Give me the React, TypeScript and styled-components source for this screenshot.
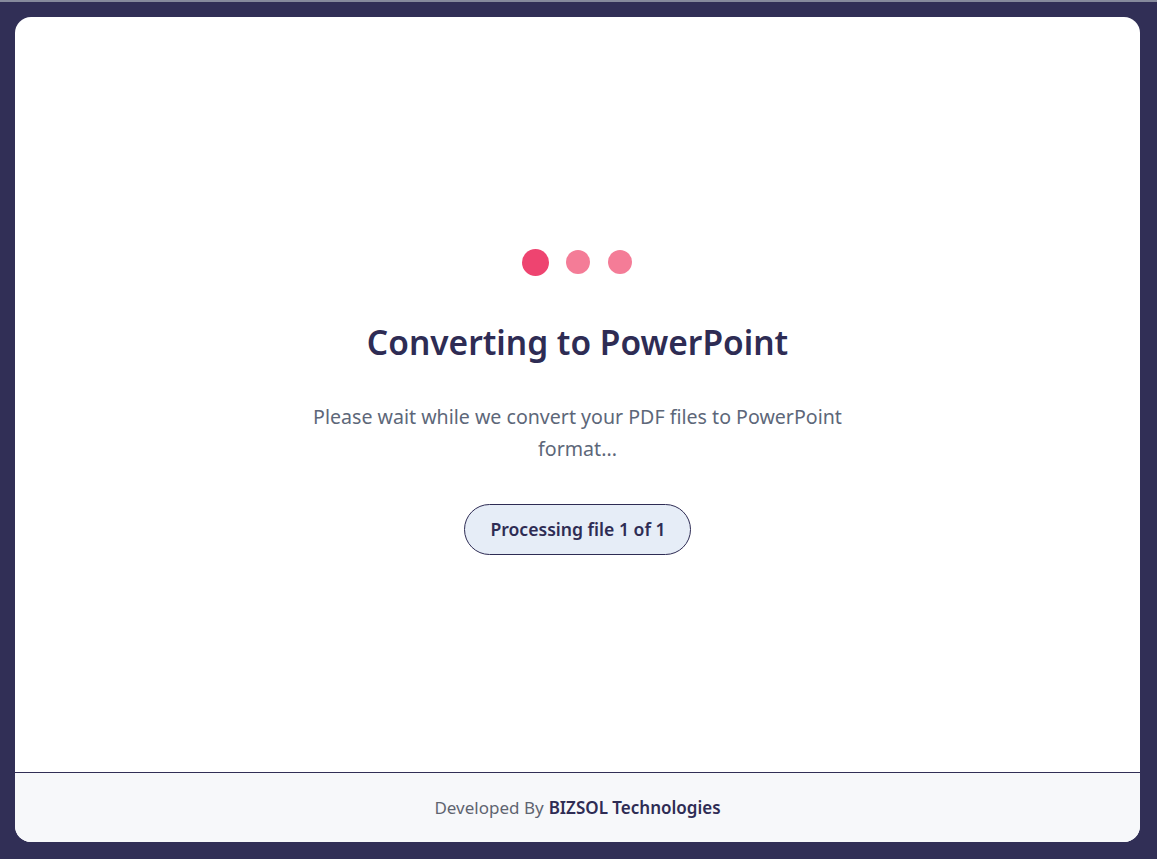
import styled, { createGlobalStyle } from 'styled-components';

const GlobalStyle = createGlobalStyle`
  html, body {
    margin: 0;
    padding: 0;
    height: 100%;
  }
  body {
    font-family: 'Noto Sans', 'Open Sans', sans-serif;
    background: #312f56;
  }
`;

const Overlay = styled.div`
  position: fixed;
  inset: 0;
  background: #312f56;
  border-top: 2px solid #868a9c;
  box-sizing: border-box;
  padding: 15px 17px 17px 15px;
  display: flex;
`;

const Modal = styled.div`
  flex: 1;
  background: #ffffff;
  border-radius: 16px;
  overflow: hidden;
  display: flex;
  flex-direction: column;
`;

const Body = styled.div`
  flex: 1;
  display: flex;
  flex-direction: column;
  align-items: center;
  justify-content: center;
  padding-top: 14px;
`;

const Dots = styled.div`
  display: flex;
  align-items: center;
  gap: 15px;
  height: 27px;
`;

const Dot = styled.span<{ $active?: boolean }>`
  width: ${(p) => (p.$active ? 27 : 24)}px;
  height: ${(p) => (p.$active ? 27 : 24)}px;
  margin: 0 ${(p) => (p.$active ? 0 : 1.5)}px;
  border-radius: 50%;
  background: ${(p) => (p.$active ? '#ee4470' : '#f47c97')};
`;

const Title = styled.h2`
  margin: 46px 0 0;
  font-size: 33.5px;
  line-height: 41px;
  font-weight: 600;
  color: #2e2c54;
  text-align: center;
`;

const Message = styled.p`
  margin: 38px 0 0;
  max-width: 535px;
  font-size: 19.6px;
  line-height: 32px;
  color: #5d6779;
  text-align: center;
`;

const Progress = styled.div`
  margin-top: 39px;
  height: 51px;
  box-sizing: border-box;
  padding: 0 24px 0 25px;
  display: flex;
  align-items: center;
  border: 1px solid #2e2c54;
  border-radius: 999px;
  background: #e6edf7;
  color: #2e2c54;
  font-size: 17.6px;
  font-weight: 600;
`;

const Footer = styled.footer`
  height: 70px;
  box-sizing: border-box;
  border-top: 1px solid #312f56;
  background: #f7f8fa;
  display: flex;
  align-items: center;
  justify-content: center;
  font-size: 17px;
  color: #5f6470;
`;

const Brand = styled.strong`
  margin-left: 5px;
  font-weight: 600;
  color: #2e2c54;
`;

export default function App(): JSX.Element {
  return (
    <>
      <GlobalStyle />
      <Overlay>
        <Modal>
          <Body>
            <Dots>
              <Dot $active />
              <Dot />
              <Dot />
            </Dots>
            <Title>Converting to PowerPoint</Title>
            <Message>
              Please wait while we convert your PDF files to PowerPoint format...
            </Message>
            <Progress>Processing file 1 of 1</Progress>
          </Body>
          <Footer>
            Developed By<Brand>BIZSOL Technologies</Brand>
          </Footer>
        </Modal>
      </Overlay>
    </>
  );
}
